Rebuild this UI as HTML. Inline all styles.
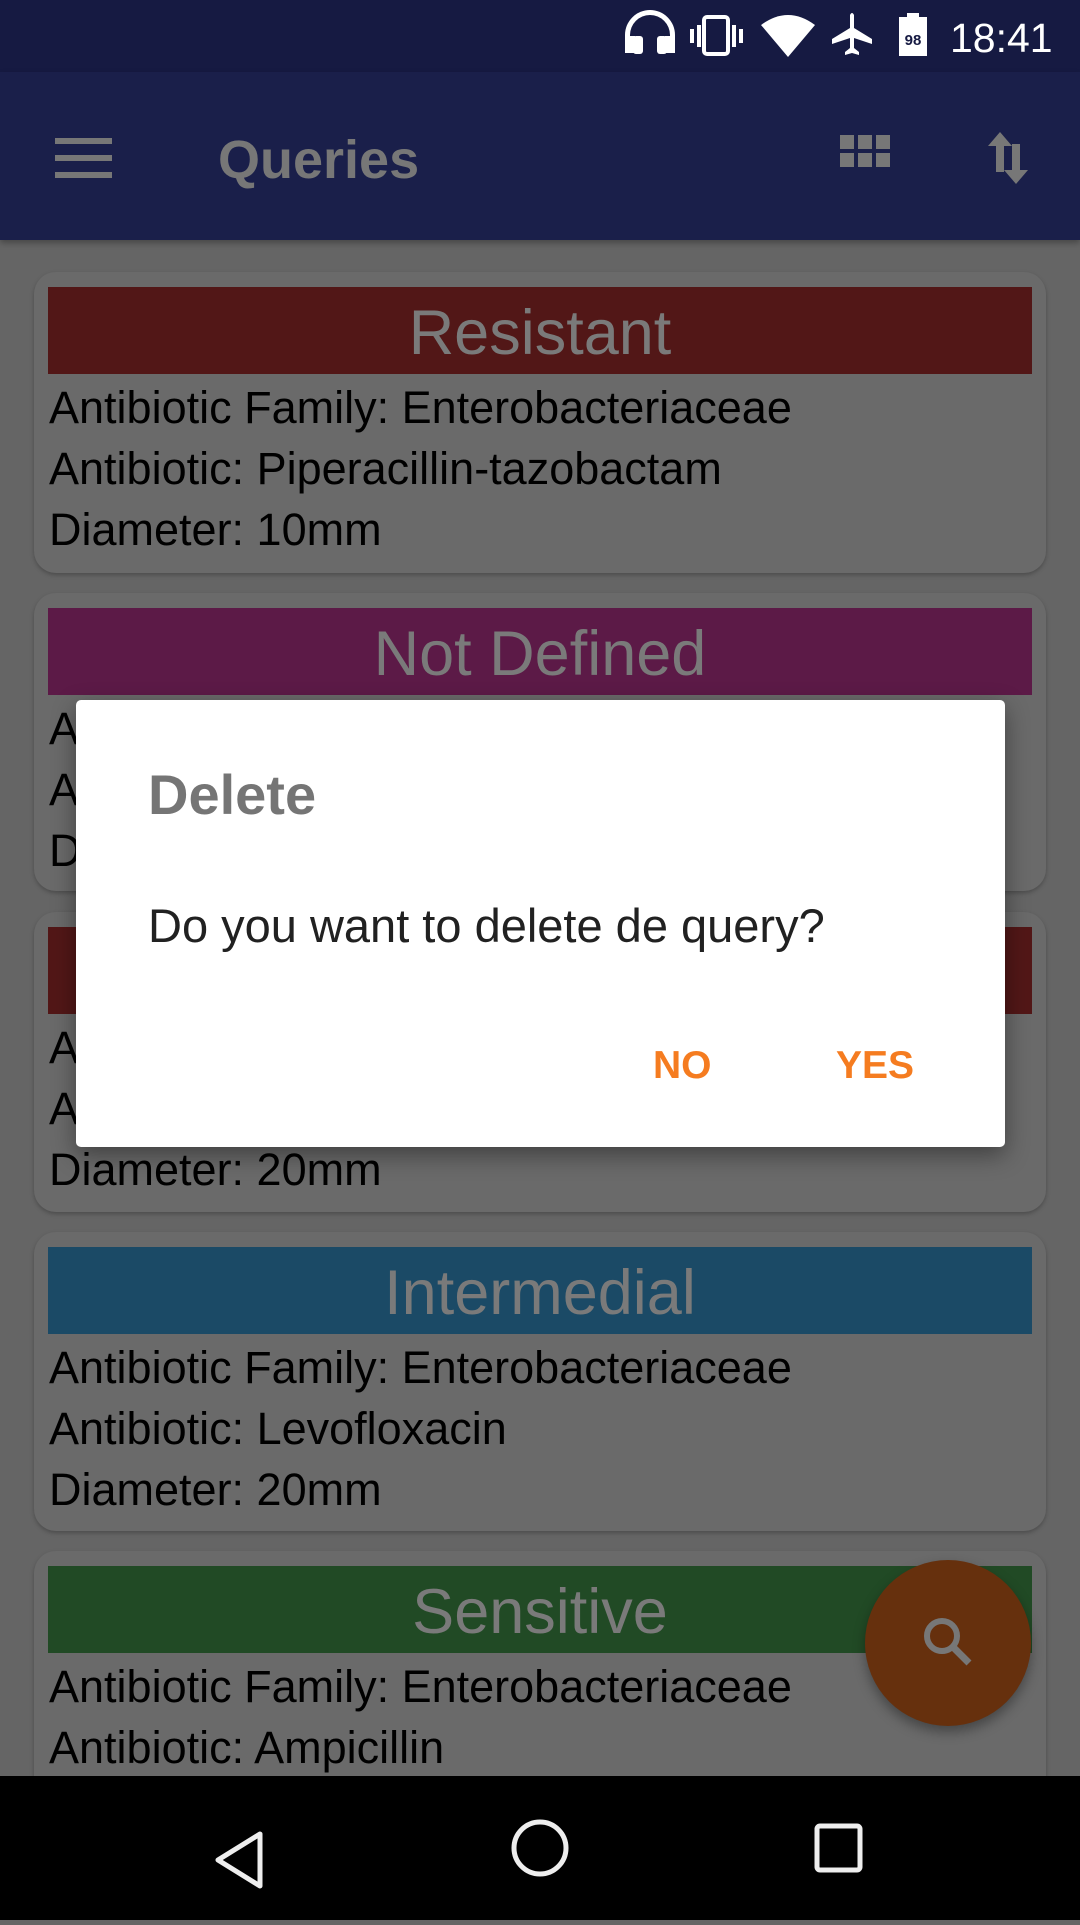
<!DOCTYPE html>
<html><head><meta charset="utf-8"><style>
*{margin:0;padding:0;box-sizing:border-box}
body{width:1080px;height:1920px;overflow:hidden;background:#656565;font-family:"Liberation Sans",sans-serif;position:relative}
.sb{position:absolute;left:0;top:0;width:1080px;height:72px;background:#161a42}
.ab{position:absolute;left:0;top:72px;width:1080px;height:168px;background:#1a1f4a;box-shadow:0 3px 6px rgba(0,0,0,.3)}
.card{position:absolute;left:34px;width:1012px;background:#6a6a6a;border-radius:22px;box-shadow:0 2px 4px rgba(0,0,0,.25)}
.hd{position:absolute;left:14px;width:984px;height:87px;top:15px;text-align:center;color:#7a7a7a;font-size:63px;line-height:92px}
.ln{position:absolute;left:15px;font-size:45px;color:#000;white-space:nowrap}
.dlg{position:absolute;left:76px;top:700px;width:929px;height:447px;background:#fff;border-radius:5px;box-shadow:0 8px 24px rgba(0,0,0,.4)}
.nav{position:absolute;left:0;top:1776px;width:1080px;height:144px;background:#000}
</style></head><body>
<div class="sb">
<svg width="1080" height="72" style="position:absolute;left:0;top:0">
<g fill="#fff">
<path d="M625 53v-18a25 25 0 0 1 50 0v18h-10v-17h5v-1a20 20 0 0 0-40 0v1h5v17z"/>
<rect x="633" y="36" width="10" height="18" rx="3"/><rect x="657" y="36" width="10" height="18" rx="3"/>
<rect x="704" y="17" width="24" height="37" rx="3" fill="none" stroke="#fff" stroke-width="4"/>
<rect x="690" y="29" width="4" height="14"/><rect x="697" y="25" width="4" height="22"/>
<rect x="732" y="25" width="4" height="22"/><rect x="739" y="29" width="4" height="14"/>
<path d="M761 25q27-20 54 0l-27 32z"/>
<path d="M850 15q2-4 4 0v13l18 11v5l-18-6v10l5 4v3l-7-2-7 2v-3l5-4v-10l-18 6v-5l18-11z"/>
<rect x="899" y="17" width="28" height="39"/><rect x="907" y="13" width="12" height="5"/>
</g>
<text x="913" y="45" fill="#161a42" font-size="15" font-weight="bold" text-anchor="middle" font-family="Liberation Sans">98</text>
<text x="950" y="52" fill="#fff" font-size="41" font-family="Liberation Sans">18:41</text>
</svg>
</div>
<div class="ab">
<svg width="1080" height="168" style="position:absolute;left:0;top:0">
<g fill="#777">
<rect x="55" y="66" width="57" height="6"/><rect x="55" y="83" width="57" height="6"/><rect x="55" y="100" width="57" height="6"/>
<rect x="840" y="63" width="14" height="14"/><rect x="858" y="63" width="14" height="14"/><rect x="876" y="63" width="14" height="14"/>
<rect x="840" y="81" width="14" height="14"/><rect x="858" y="81" width="14" height="14"/><rect x="876" y="81" width="14" height="14"/>
<path d="M1000 60l-12 14h8v26h8v-26h8z"/>
<path d="M1016 112l12-14h-8v-26h-8v26h-8z"/>
</g>
<text x="218" y="106" fill="#777" font-size="54" font-weight="bold" font-family="Liberation Sans">Queries</text>
</svg>
</div>

<div class="card" style="top:272px;height:301px"><div class="hd" style="background:#521717">Resistant</div>
<div class="ln" style="top:110px">Antibiotic Family: Enterobacteriaceae</div>
<div class="ln" style="top:171px">Antibiotic: Piperacillin-tazobactam</div>
<div class="ln" style="top:232px">Diameter: 10mm</div></div>

<div class="card" style="top:593px;height:298px"><div class="hd" style="background:#5c1a47">Not Defined</div>
<div class="ln" style="top:110px">Antibiotic Family: Enterobacteriaceae</div>
<div class="ln" style="top:171px">Antibiotic: Amikacin</div>
<div class="ln" style="top:232px">Diameter: 10mm</div></div>

<div class="card" style="top:912px;height:300px"><div class="hd" style="background:#521717">Resistant</div>
<div class="ln" style="top:110px">Antibiotic Family: Enterobacteriaceae</div>
<div class="ln" style="top:171px">Antibiotic: Ciprofloxacin</div>
<div class="ln" style="top:232px">Diameter: 20mm</div></div>

<div class="card" style="top:1232px;height:299px"><div class="hd" style="background:#1b4a66">Intermedial</div>
<div class="ln" style="top:110px">Antibiotic Family: Enterobacteriaceae</div>
<div class="ln" style="top:171px">Antibiotic: Levofloxacin</div>
<div class="ln" style="top:232px">Diameter: 20mm</div></div>

<div class="card" style="top:1551px;height:300px"><div class="hd" style="background:#214a25">Sensitive</div>
<div class="ln" style="top:110px">Antibiotic Family: Enterobacteriaceae</div>
<div class="ln" style="top:171px">Antibiotic: Ampicillin</div></div>

<div style="position:absolute;left:865px;top:1560px;width:166px;height:166px;border-radius:50%;background:#66300d;box-shadow:0 6px 12px rgba(0,0,0,.35)">
<svg width="166" height="166"><circle cx="77" cy="76" r="15" fill="none" stroke="#777" stroke-width="6"/><path d="M88 87l16 16" stroke="#777" stroke-width="7"/></svg></div>

<div class="dlg">
<div style="position:absolute;left:72px;top:62px;font-size:56px;font-weight:bold;color:#757575">Delete</div>
<div style="position:absolute;left:72px;top:198px;font-size:47px;color:#212121">Do you want to delete de query?</div>
<div style="position:absolute;left:577px;top:344px;font-size:39px;font-weight:bold;color:#f57c20">NO</div>
<div style="position:absolute;left:760px;top:344px;font-size:39px;font-weight:bold;color:#f57c20">YES</div>
</div>

<div class="nav">
<svg width="1080" height="144">
<path d="M260 110l-42-26 42-26z" fill="none" stroke="#eee" stroke-width="5" stroke-linejoin="round"/>
<circle cx="540" cy="72" r="26" fill="none" stroke="#eee" stroke-width="5"/>
<rect x="817" y="50" width="43" height="44" rx="3" fill="none" stroke="#eee" stroke-width="5"/>
</svg>
</div>
</body></html>
